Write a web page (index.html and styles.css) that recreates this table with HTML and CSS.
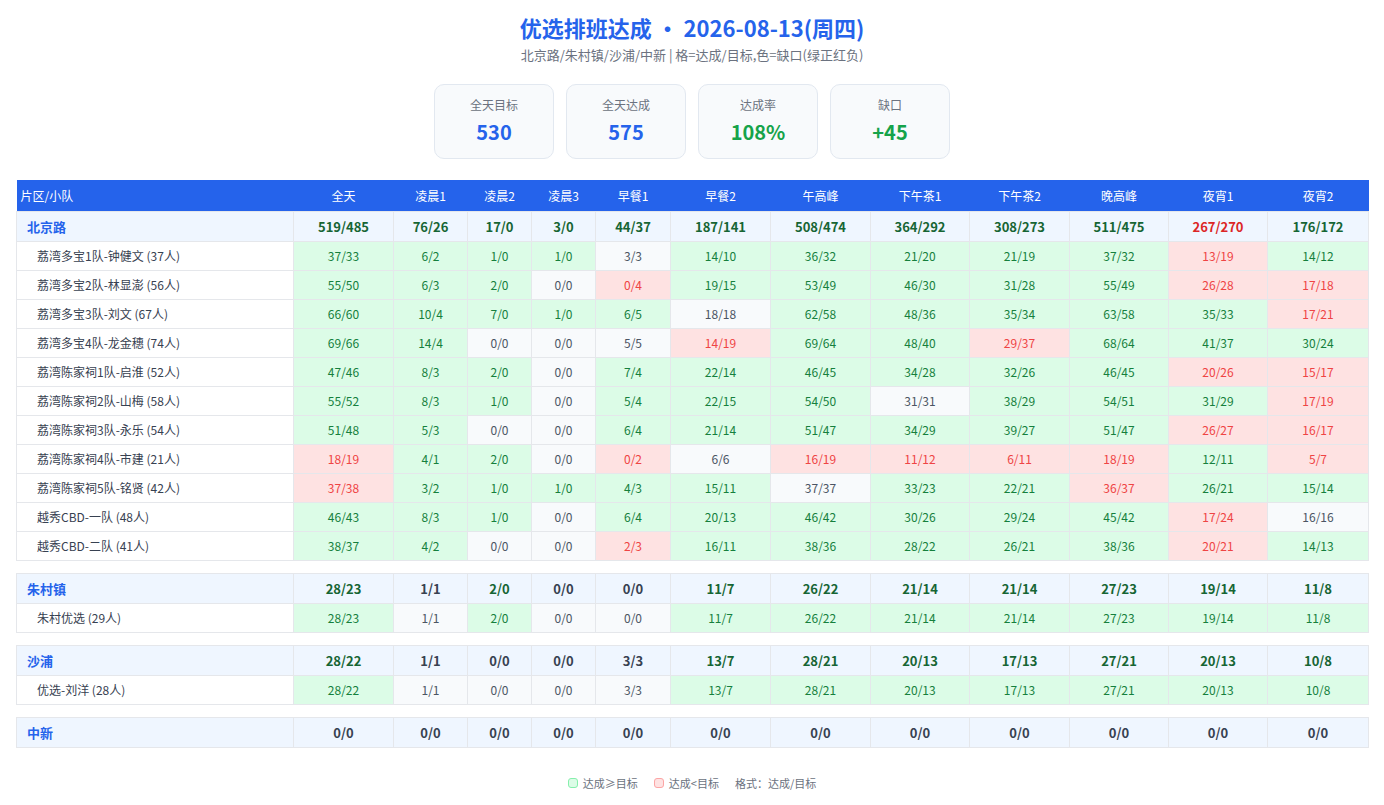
FILE: index.html
```html
<!DOCTYPE html>
<html lang="zh-CN">
<head>
<meta charset="utf-8">
<title>优选排班达成</title>
<link rel="stylesheet" href="styles.css">
</head>
<body>
<div class="page">
  <h1 class="title">优选排班达成 · 2026-08-13(周四)</h1>
  <div class="subtitle">北京路/朱村镇/沙浦/中新 | 格=达成/目标,色=缺口(绿正红负)</div>
  <div class="cards">
    <div class="card"><div class="card-label">全天目标</div><div class="card-value blue">530</div></div>
    <div class="card"><div class="card-label">全天达成</div><div class="card-value blue">575</div></div>
    <div class="card"><div class="card-label">达成率</div><div class="card-value green">108%</div></div>
    <div class="card"><div class="card-label">缺口</div><div class="card-value green">+45</div></div>
  </div>
  <table class="grid">
    <colgroup>
      <col class="c-name"><col class="c100"><col class="c74"><col class="c64"><col class="c64"><col class="c75"><col class="c100"><col class="c100"><col class="c99"><col class="c100"><col class="c99"><col class="c99"><col class="c101">
    </colgroup>
    <thead>
      <tr><th class="th-name">片区/小队</th><th>全天</th><th>凌晨1</th><th>凌晨2</th><th>凌晨3</th><th>早餐1</th><th>早餐2</th><th>午高峰</th><th>下午茶1</th><th>下午茶2</th><th>晚高峰</th><th>夜宵1</th><th>夜宵2</th></tr>
    </thead>
    <tbody>
      <tr class="region"><td class="rname">北京路</td><td class="g">519/485</td><td class="g">76/26</td><td class="g">17/0</td><td class="g">3/0</td><td class="g">44/37</td><td class="g">187/141</td><td class="g">508/474</td><td class="g">364/292</td><td class="g">308/273</td><td class="g">511/475</td><td class="r">267/270</td><td class="g">176/172</td></tr>
      <tr class="team"><td class="tname">荔湾多宝1队-钟健文 (37人)</td><td class="g">37/33</td><td class="g">6/2</td><td class="g">1/0</td><td class="g">1/0</td><td class="n">3/3</td><td class="g">14/10</td><td class="g">36/32</td><td class="g">21/20</td><td class="g">21/19</td><td class="g">37/32</td><td class="r">13/19</td><td class="g">14/12</td></tr>
      <tr class="team"><td class="tname">荔湾多宝2队-林显澎 (56人)</td><td class="g">55/50</td><td class="g">6/3</td><td class="g">2/0</td><td class="n">0/0</td><td class="r">0/4</td><td class="g">19/15</td><td class="g">53/49</td><td class="g">46/30</td><td class="g">31/28</td><td class="g">55/49</td><td class="r">26/28</td><td class="r">17/18</td></tr>
      <tr class="team"><td class="tname">荔湾多宝3队-刘文 (67人)</td><td class="g">66/60</td><td class="g">10/4</td><td class="g">7/0</td><td class="g">1/0</td><td class="g">6/5</td><td class="n">18/18</td><td class="g">62/58</td><td class="g">48/36</td><td class="g">35/34</td><td class="g">63/58</td><td class="g">35/33</td><td class="r">17/21</td></tr>
      <tr class="team"><td class="tname">荔湾多宝4队-龙金穗 (74人)</td><td class="g">69/66</td><td class="g">14/4</td><td class="n">0/0</td><td class="n">0/0</td><td class="n">5/5</td><td class="r">14/19</td><td class="g">69/64</td><td class="g">48/40</td><td class="r">29/37</td><td class="g">68/64</td><td class="g">41/37</td><td class="g">30/24</td></tr>
      <tr class="team"><td class="tname">荔湾陈家祠1队-启淮 (52人)</td><td class="g">47/46</td><td class="g">8/3</td><td class="g">2/0</td><td class="n">0/0</td><td class="g">7/4</td><td class="g">22/14</td><td class="g">46/45</td><td class="g">34/28</td><td class="g">32/26</td><td class="g">46/45</td><td class="r">20/26</td><td class="r">15/17</td></tr>
      <tr class="team"><td class="tname">荔湾陈家祠2队-山梅 (58人)</td><td class="g">55/52</td><td class="g">8/3</td><td class="g">1/0</td><td class="n">0/0</td><td class="g">5/4</td><td class="g">22/15</td><td class="g">54/50</td><td class="n">31/31</td><td class="g">38/29</td><td class="g">54/51</td><td class="g">31/29</td><td class="r">17/19</td></tr>
      <tr class="team"><td class="tname">荔湾陈家祠3队-永乐 (54人)</td><td class="g">51/48</td><td class="g">5/3</td><td class="n">0/0</td><td class="n">0/0</td><td class="g">6/4</td><td class="g">21/14</td><td class="g">51/47</td><td class="g">34/29</td><td class="g">39/27</td><td class="g">51/47</td><td class="r">26/27</td><td class="r">16/17</td></tr>
      <tr class="team"><td class="tname">荔湾陈家祠4队-市建 (21人)</td><td class="r">18/19</td><td class="g">4/1</td><td class="g">2/0</td><td class="n">0/0</td><td class="r">0/2</td><td class="n">6/6</td><td class="r">16/19</td><td class="r">11/12</td><td class="r">6/11</td><td class="r">18/19</td><td class="g">12/11</td><td class="r">5/7</td></tr>
      <tr class="team"><td class="tname">荔湾陈家祠5队-铭贤 (42人)</td><td class="r">37/38</td><td class="g">3/2</td><td class="g">1/0</td><td class="g">1/0</td><td class="g">4/3</td><td class="g">15/11</td><td class="n">37/37</td><td class="g">33/23</td><td class="g">22/21</td><td class="r">36/37</td><td class="g">26/21</td><td class="g">15/14</td></tr>
      <tr class="team"><td class="tname">越秀CBD-一队 (48人)</td><td class="g">46/43</td><td class="g">8/3</td><td class="g">1/0</td><td class="n">0/0</td><td class="g">6/4</td><td class="g">20/13</td><td class="g">46/42</td><td class="g">30/26</td><td class="g">29/24</td><td class="g">45/42</td><td class="r">17/24</td><td class="n">16/16</td></tr>
      <tr class="team"><td class="tname">越秀CBD-二队 (41人)</td><td class="g">38/37</td><td class="g">4/2</td><td class="n">0/0</td><td class="n">0/0</td><td class="r">2/3</td><td class="g">16/11</td><td class="g">38/36</td><td class="g">28/22</td><td class="g">26/21</td><td class="g">38/36</td><td class="r">20/21</td><td class="g">14/13</td></tr>
      <tr class="spacer"><td colspan="13"></td></tr>
      <tr class="region"><td class="rname">朱村镇</td><td class="g">28/23</td><td class="n">1/1</td><td class="g">2/0</td><td class="n">0/0</td><td class="n">0/0</td><td class="g">11/7</td><td class="g">26/22</td><td class="g">21/14</td><td class="g">21/14</td><td class="g">27/23</td><td class="g">19/14</td><td class="g">11/8</td></tr>
      <tr class="team"><td class="tname">朱村优选 (29人)</td><td class="g">28/23</td><td class="n">1/1</td><td class="g">2/0</td><td class="n">0/0</td><td class="n">0/0</td><td class="g">11/7</td><td class="g">26/22</td><td class="g">21/14</td><td class="g">21/14</td><td class="g">27/23</td><td class="g">19/14</td><td class="g">11/8</td></tr>
      <tr class="spacer"><td colspan="13"></td></tr>
      <tr class="region"><td class="rname">沙浦</td><td class="g">28/22</td><td class="n">1/1</td><td class="n">0/0</td><td class="n">0/0</td><td class="n">3/3</td><td class="g">13/7</td><td class="g">28/21</td><td class="g">20/13</td><td class="g">17/13</td><td class="g">27/21</td><td class="g">20/13</td><td class="g">10/8</td></tr>
      <tr class="team"><td class="tname">优选-刘洋 (28人)</td><td class="g">28/22</td><td class="n">1/1</td><td class="n">0/0</td><td class="n">0/0</td><td class="n">3/3</td><td class="g">13/7</td><td class="g">28/21</td><td class="g">20/13</td><td class="g">17/13</td><td class="g">27/21</td><td class="g">20/13</td><td class="g">10/8</td></tr>
      <tr class="spacer"><td colspan="13"></td></tr>
      <tr class="region"><td class="rname">中新</td><td class="n">0/0</td><td class="n">0/0</td><td class="n">0/0</td><td class="n">0/0</td><td class="n">0/0</td><td class="n">0/0</td><td class="n">0/0</td><td class="n">0/0</td><td class="n">0/0</td><td class="n">0/0</td><td class="n">0/0</td><td class="n">0/0</td></tr>
    </tbody>
  </table>
  <div class="legend">
    <span class="legend-item"><i class="sw sw-g"></i>达成≥目标</span>
    <span class="legend-item"><i class="sw sw-r"></i>达成&lt;目标</span>
    <span class="legend-item">格式：达成/目标</span>
  </div>
</div>
</body>
</html>
```
FILE: styles.css
```css
* { box-sizing: border-box; }
html, body { margin: 0; padding: 0; background: #ffffff; }
body {
  font-family: "Noto Sans CJK SC", "Noto Sans", sans-serif;
  color: #374151;
}
.page { padding: 12px 16px 16px; }
.title {
  margin: 0;
  text-align: center;
  font-size: 22px;
  line-height: 30px;
  font-weight: 700;
  color: #2563eb;
}
.subtitle {
  margin-top: 4px;
  text-align: center;
  font-size: 13px;
  line-height: 18px;
  color: #6b7280;
}
.cards {
  display: flex;
  justify-content: center;
  gap: 12px;
  margin-top: 20px;
}
.card {
  width: 120px;
  height: 75px;
  padding: 11px 8px;
  background: #f8fafc;
  border: 1px solid #e2e8f0;
  border-radius: 10px;
  text-align: center;
}
.card-label { font-size: 12px; line-height: 18px; color: #6b7280; }
.card-value { margin-top: 4px; font-size: 20px; line-height: 28px; font-weight: 700; }
.blue { color: #2563eb; }
.green { color: #16a34a; }

.grid {
  width: 100%;
  margin-top: 21px;
  border-collapse: collapse;
  table-layout: fixed;
  font-size: 12px;
}
.c-name { width: 277px; }
.c100 { width: 100px; }
.c101 { width: 101px; }
.c99 { width: 99px; }
.c75 { width: 75px; }
.c74 { width: 74px; }
.c64 { width: 64px; }

.grid th {
  background: #2563eb;
  color: #ffffff;
  font-weight: 400;
  font-size: 12px;
  line-height: 19px;
  padding: 6px 4px;
  text-align: center;
}
.grid th.th-name { text-align: left; }
.grid td {
  border: 1px solid #e5e7eb;
  text-align: center;
  padding: 5px 4px;
  line-height: 18px;
  white-space: nowrap;
}
.region td {
  background: #eff6ff;
  font-weight: 700;
  font-size: 13px;
  padding: 5px 4px;
  line-height: 19px;
}
.region td.rname { text-align: left; padding-left: 10px; color: #2563eb; }
.team td.tname { text-align: left; padding-left: 20px; color: #374151; background: #ffffff; }

.team td.g { background: #dcfce7; color: #15803d; }
.team td.r { background: #fee2e2; color: #ef4444; }
.team td.n { background: #f8fafc; color: #4b5563; }
.region td.g { color: #166534; }
.region td.r { color: #dc2626; }
.region td.n { color: #374151; }

.spacer td {
  border: none;
  padding: 0;
  height: 13px;
  line-height: 0;
  background: #ffffff;
}

.legend {
  margin-top: 26px;
  display: flex;
  justify-content: center;
  gap: 16px;
  font-size: 11px;
  line-height: 18px;
  color: #6b7280;
}
.legend-item { display: inline-flex; align-items: center; }
.sw {
  display: inline-block;
  width: 10px;
  height: 10px;
  border-radius: 3px;
  margin-right: 5px;
}
.sw-g { background: #dcfce7; border: 1px solid #86efac; }
.sw-r { background: #fee2e2; border: 1px solid #fca5a5; }
```
